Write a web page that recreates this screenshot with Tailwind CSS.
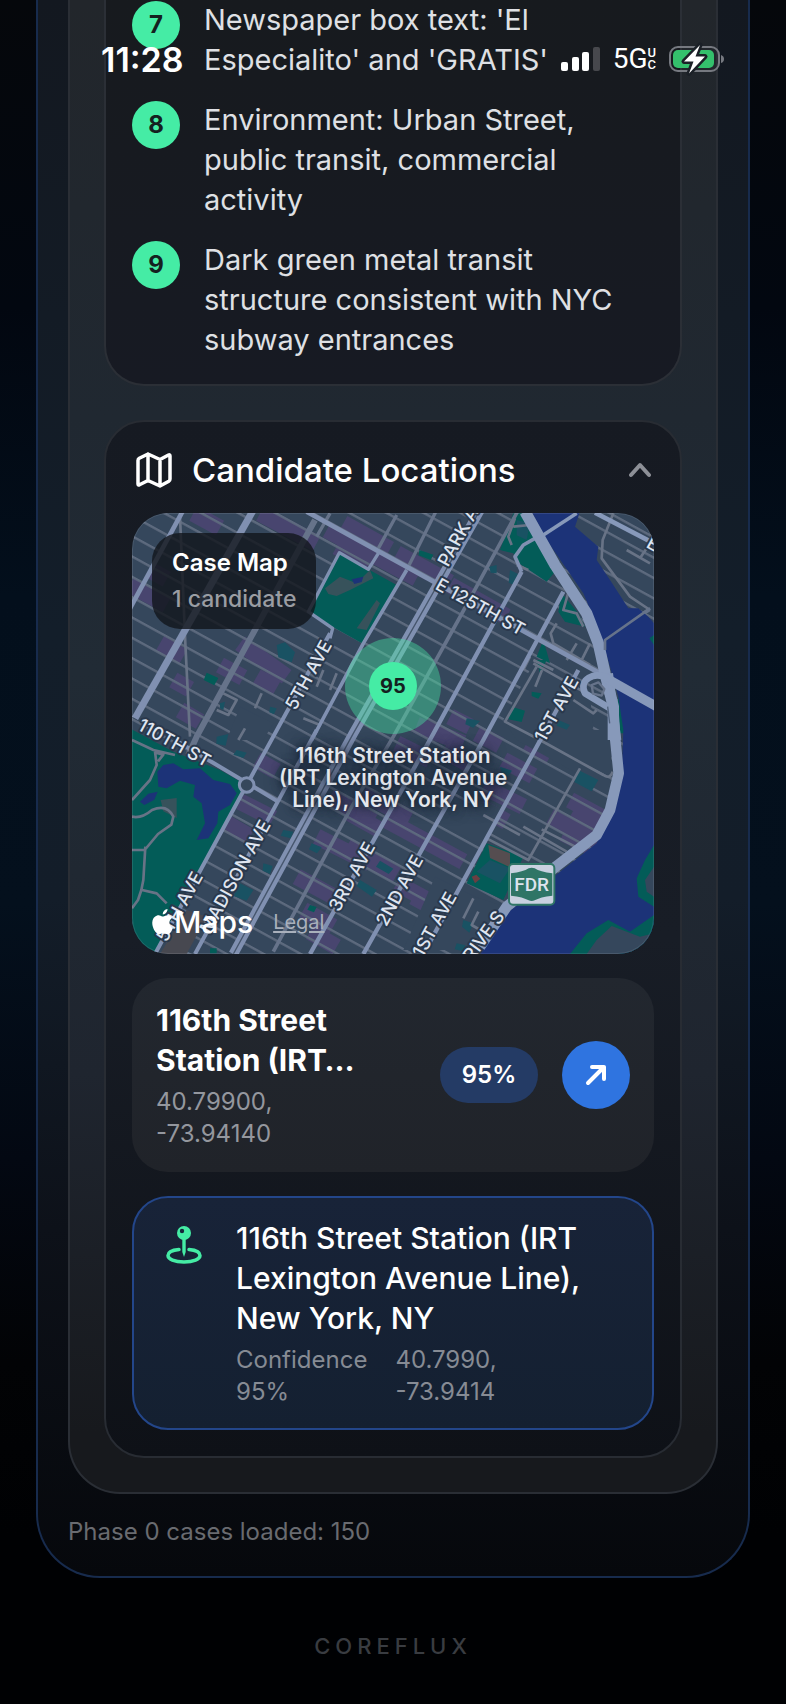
<!DOCTYPE html>
<html lang="en">
<head>
  <meta charset="UTF-8">
  <meta name="viewport" content="width=device-width, initial-scale=1.0">
  <title>Coreflux - Case Report</title>
  <script src="https://cdn.jsdelivr.net/npm/@tailwindcss/browser@4"></script>
</head>
<body class="min-h-screen overflow-x-hidden bg-[#000103] font-['Inter','Noto_Sans',sans-serif] text-white">
  <div class="relative min-h-screen bg-[linear-gradient(#05070b_0%,#020710_18%,#030f1c_35%,#04101d_53%,#030812_68%,#020305_80%,#000103_90%)] px-9">

    <!-- Status bar -->
    <header class="absolute inset-x-0 top-0 z-20 flex h-[118px] items-center justify-between pr-[62px] pl-[101px]">
      <span class="text-[34px] font-semibold">11:28</span>
      <div class="flex items-center gap-3">
        <svg class="h-6 w-[40px]" viewBox="0 0 40 24" aria-label="Signal strength">
          <rect x="0" y="15" width="7" height="9" rx="2" fill="#fff"/>
          <rect x="11" y="10" width="7" height="14" rx="2" fill="#fff"/>
          <rect x="21" y="5" width="7" height="19" rx="2" fill="#fff"/>
          <rect x="32" y="0" width="7" height="24" rx="2" fill="#47484d"/>
        </svg>
        <span class="flex items-center font-['Roboto',sans-serif] text-[28px]">5G<span class="flex flex-col text-[13px] leading-3 font-medium"><span>U</span><span>C</span></span></span>
        <svg class="h-[30px] w-[56px] overflow-visible" viewBox="0 0 56 30" aria-label="Battery charging">
          <rect x="2" y="3" width="49" height="24" rx="8" fill="none" stroke="#767980" stroke-width="2"/>
          <path d="M53 11q3 1 3 4t-3 4z" fill="#767980"/>
          <rect x="5" y="6" width="41" height="18" rx="5" fill="#34c06c"/>
          <path d="M32 1 16 17.500h9.500L21 29.500 37 12.500H27.500z" fill="#fff" stroke="#1b2027" stroke-width="5" paint-order="stroke" stroke-linejoin="round"/>
        </svg>
      </div>
    </header>

    <main class="rounded-b-[64px] border-2 border-t-0 border-[#172b4d] bg-[linear-gradient(#131820_0%,#131e2a_40%,#131d29_57%,#0d1119_78%,#06080c_100%)] px-[30px] pb-6">
      <div class="rounded-b-[52px] border-2 border-t-0 border-[#2a2e35] bg-[linear-gradient(#22262b_0%,#202831_28%,#212b35_45%,#1f252f_72%,#17191d_96%)] px-[34px] pb-[34px]">

        <!-- Evidence list -->
        <section class="rounded-b-[40px] border-2 border-t-0 border-[#2b2f36] bg-linear-to-b from-[#171a1e] to-[#171a23] px-[26px] pb-6">
          <ol class="flex flex-col gap-5 text-[29px] leading-10 text-[#dfe0e4]">
            <li class="flex items-start gap-6">
              <span class="mt-px flex size-12 shrink-0 items-center justify-center rounded-full bg-[#45eca5] text-2xl font-bold text-[#14211f]">7</span>
              <p>Newspaper box text: 'El<br>Especialito' and 'GRATIS'</p>
            </li>
            <li class="flex items-start gap-6">
              <span class="mt-px flex size-12 shrink-0 items-center justify-center rounded-full bg-[#45eca5] text-2xl font-bold text-[#14211f]">8</span>
              <p>Environment: Urban Street,<br>public transit, commercial<br>activity</p>
            </li>
            <li class="flex items-start gap-6">
              <span class="mt-px flex size-12 shrink-0 items-center justify-center rounded-full bg-[#45eca5] text-2xl font-bold text-[#14211f]">9</span>
              <p>Dark green metal transit<br>structure consistent with NYC<br>subway entrances</p>
            </li>
          </ol>
        </section>

        <!-- Candidate locations -->
        <section class="mt-[34px] rounded-[40px] border-2 border-[#282c33] bg-linear-to-b from-[#161a22] via-[#181d26] to-[#0e1117] px-[26px] pt-5 pb-[26px]">
          <button type="button" class="flex h-14 w-full items-center text-left">
            <svg class="ml-1 size-9" viewBox="0 0 36 36" fill="none" stroke="#fff" stroke-width="3.500" stroke-linejoin="round" stroke-linecap="round" aria-hidden="true">
              <path d="M2 8.500q0-1.500 1.300-2.200L12 2l12 5.500 8.500-4.500q1.500-.6 1.500 1V27q0 1.500-1.200 2.200L24 34l-12-5.500-8.500 4.300Q2 33.400 2 32zM12 2v26.500M24 7.500V34"/>
            </svg>
            <h2 class="ml-5 grow text-[33px] leading-10 font-medium">Candidate Locations</h2>
            <svg class="mr-[3px] h-4 w-[22px]" viewBox="0 0 22 16" fill="none" stroke="#8d9097" stroke-width="4" stroke-linecap="round" stroke-linejoin="round" aria-hidden="true"><path d="m2 13 9-10 9 10"/></svg>
          </button>

          <div class="relative mt-[15px] overflow-hidden rounded-[36px]">
            <svg class="block w-full" viewBox="6 9 1566 1323" role="img" aria-label="Map of East Harlem">
              <defs>
                <pattern id="streets" width="61" height="61" patternUnits="userSpaceOnUse" patternTransform="translate(0 -295) skewY(28.72)">
                  <rect y="0" width="61" height="8" fill="#5d6a7e"/>
                </pattern>
              </defs>
              <rect x="6" y="9" width="1566" height="1323" fill="#35475c"/>

              <!-- commercial blocks -->
              <g fill="none" stroke="#48456f" stroke-width="50">
                <path d="M190 10 270 54M390 10 560 100M590 60 860 205M640 40 780 118M620 110 720 165M800 130l160 88M960 225l170 95M900 190l-90-50"/>
                <path d="M0 225 110 285M60 180l50 28M90 400l70 40M270 465l70 38M130 510l50 28M330 400 470 500M380 500l60 34M150 600l60 35M860 645 1000 700M960 620l60 30M1040 670l70 36"/>
                <path d="M380 750l60 34M330 875 430 925M290 940l70 40M600 860 730 935M560 980 720 1060M660 910l90 50M500 1100l130 70M650 1010l150 85M520 1200l90 50M540 1265l80 46M760 925 1000 1055M700 850l140 75M800 1120 920 1185M850 1160l110 60"/>
                <path d="M800 700 900 750M940 720l80 45M1060 830 1180 890M1120 750l90 48M1190 700l70 40M1050 890l80 45M1260 920 1380 985M1320 870 1440 935M1320 920l110 60M1300 970l120 60"/>
              </g>

              <rect x="6" y="9" width="1566" height="1323" fill="url(#streets)"/>

              <!-- campus blocks without through streets -->
              <g fill="#35475c">
                <path d="M330 590 430 640 400 690 290 690zM1205 470 1300 500 1380 560 1390 650 1340 790 1160 690 1120 630zM1080 880 1120 900 1060 1010 930 940 950 880zM1310 660h140l-10 140-120-60zM915 1100l120 60 120 40-60 120H820z"/>
              </g>
              <g fill="#195263">
                <path d="m440 405 25-8 30 30-10 30-40-15zM270 580l15-5-5 25-10-5zM420 590l20 5-8 18-14-6zM260 680l35-8-8 35-28-6zM320 720l30 8-10 16-30-10zM460 960l30 5-8 20-30-8zM545 1000l30 12-14 18-24-12zM400 1060l28 8-8 24-22-10zM330 1120l40 20-20 32-40-14zM690 1110l50 30-14 20-46-32zM750 1052l40 24-14 16-38-22zM1078 170l22-5v25l-18-2zM1140 180l24 12-10 34-18-8zM1345 780l60 30-20 34-52-28zM1110 770l36 12-20 28-10-20zM1010 625l40 8-20 20-24-10zM1285 630l35 15-10 14-30-12zM1050 1040l90 50-20 40-90-40zM1000 1230l30 10-12 28-22-18zM980 1300l26 6-6 18-26-6z"/>
              </g>

              <!-- parks -->
              <g fill="#035c58">
                <path d="M628 130 800 225 700 402 535 310z"/>
                <path d="M0 655 130 725 270 780 340 820 350 835 75 1332H0z"/>
                <path d="M1150 10h50l10 60 65 115-25 30-90-60-10-25-40-10zM1295 250l50 60 20 40-60-15-20-30zM1240 390l20 70-40-20zM1220 450h30l-20 40z"/>
                <path d="m230 488 35 16-12 22-32-16zM868 120l42 14-8 16-36-14zM1205 545l30 5-10 16-20-8zM1145 590l40 12-10 34-40-8zM540 1185l20 6-8 16-20-8zM240 1315h20v15h-20z"/>
                <path d="M1070 1000 1180 1040 1120 1170 1010 1120zM1470 540l14 130h-40z"/>
              </g>
              <path d="M1080 1050 1140 1075 1110 1120 1040 1085z" fill="#195263"/>
              <path d="M1160 30l40 10-10 50-30-14z" fill="#195263"/>
              <g fill="#37525b">
                <path d="m585 235 45-35 50 20 40-40 10 25-70 35-40 18-25-6zM740 270l10 10-40 80-30-5zM92 870l48-6v60l-40-20z"/>
              </g>
              <path d="m1075 1005 65 25v42l-60-28z" fill="#554d50"/>
              <path d="m1025 1100 14-6 12 12-16 14z" fill="#6a3f43"/>
              <path d="m170 1200 60 20-60 112H90z" fill="#474850"/>

              <!-- ponds -->
              <g fill="#1c3378">
                <path d="m665 208 35-8-5 16-22 6z"/>
                <path d="M82 785 100 765 130 760 160 778 210 775 250 810 300 822 320 850 300 885 265 905 262 940 235 985 200 990 225 940 215 880 190 860 195 825 150 812 110 835 85 830z"/>
                <path d="m30 875 25-24 28-6-10 24-30 16z"/>
              </g>

              <!-- park paths and small roads -->
              <g fill="none" stroke="#687386" stroke-width="8" stroke-linejoin="round">
                <path d="M6 690 70 720 135 735M75 725 80 765 60 810 6 870M6 920q30 6 60-20 45-20 64 20l-6 24-40 28-40 48H6M46 1010 40 1110 34 1140 24 1170 6 1195M36 1140 80 1150 110 1180M78 728l22 6-16 20"/>
                <path d="M150 20 166 400 180 680"/>
                <path d="M1155 25 1135 80 1145 105M1150 50 1200 45M1160 165 1195 180M1320 230 1300 300 1340 310 1360 350M1280 340 1262 370 1270 400 1380 465M1210 450l60 30M1200 440l-20 40M1340 400 1310 450M1380 400 1350 460M1210 460l230 130M1330 570l60 40 10-10"/>
                <path d="M1450 10 1418 90 1415 145 1500 260 1560 300M1490 120 1560 160M1550 115 1530 145M1420 390 1560 295M1420 390v30"/>
                <path d="M1220 470 1125 635 1230 690M1236 480l-20 50M280 550 320 570 295 615 260 600M395 550 375 595M345 655 325 690M580 480l-20 50M620 490l-20 50M520 625l50 20-12 20"/>
                <path d="M1350 775 1195 1050 1070 985M1235 958 1340 1012M1180 950l130 75M1060 915l110 60M1230 690 1420 795q20 14 28-10M1030 1165l-30 60M1045 1205l-20 40 26 15"/>
              </g>

              <!-- avenues -->
              <g fill="none" stroke="#66738a" stroke-linejoin="round">
                <path d="M555 30 200 680 175 735" stroke-width="18"/>
                <path d="M1165 0 985 330 790 680 665 890 430 1325" stroke-width="11"/>
                <path d="M920 0 830 180M800 15 745 115M600 10 560 80" stroke-width="10"/>
                <path d="m1560 300-140 90" stroke-width="7"/>
              </g>
              <g fill="none" stroke="#8090b1" stroke-linejoin="round">
                <path d="M160 0 0 295" stroke-width="14"/>
                <path d="M370 0 15 625" stroke-width="21"/>
                <path d="M530 5 1410 490" stroke-width="14"/>
                <path d="M745 130 715 178 628 128 535 305 608 355 600 385" stroke-width="10"/>
                <path d="M600 370 350 825 75 1332M135 690 440 872M560 660 195 1332" stroke-width="12"/>
                <path d="M830 180 700 400 545 690" stroke-width="11"/>
                <path d="M1175 185 905 680 540 1332M1300 245 1060 690 700 1332" stroke-width="13"/>
                <path d="M1175 185 1155 140 1180 105 1215 85" stroke-width="11"/>
                <path d="M1345 480 1220 710 985 1140 880 1332" stroke-width="13"/>
                <path d="M1050 0 670 670 310 1332" stroke-width="29"/>
                <path d="M1050 0 670 670 310 1332" stroke="#46566d" stroke-width="4"/>
                <circle cx="350" cy="825" r="22" fill="#35475c" stroke-width="9"/>
              </g>

              <!-- East River and Harlem River -->
              <path d="M1205 5H1350L1335 50 1405 110 1400 150 1440 210 1495 295 1525 295 1555 320 1572 340V1332H1050L1130 1210 1400 1000 1440 920 1475 800 1480 660 1465 560 1440 470 1410 370 1360 250 1250 90z" fill="#1c3378"/>
              <path d="M1572 1005 1545 1050 1520 1105 1525 1160 1572 1190zM1320 1332 1370 1270 1435 1230 1500 1265 1572 1215V1332z" fill="#035c58"/>
              <path d="M1572 1070 1545 1110 1550 1145 1572 1160zM1370 1332 1400 1290 1445 1248 1530 1280 1572 1270V1332z" fill="#35475c"/>
              <path d="M1572 375l-14 10 14 20z" fill="#035c58"/>

              <!-- FDR Drive and bridges -->
              <g fill="none" stroke="#8799ba" stroke-linejoin="round">
                <path d="M1240 75 1340 10" stroke-width="11"/>
                <path d="M1395 8 1572 100" stroke-width="14"/>
                <path d="M1185 5 1275 165 1370 310 1405 400 1425 490 1450 590 1450 690" stroke-width="34"/>
                <path d="M1440 490 1465 690" stroke-width="18"/>
                <path d="M1450 600 1456 690 1466 790 1440 900 1400 975 1280 1068 1130 1190 1050 1310" stroke-width="32"/>
                <path d="M1420 500 1580 590" stroke-width="28"/>
                <path d="M1440 508C1390 480 1345 510 1365 550L1440 595" stroke-width="20"/>
                <path d="M1385 525l20-8 18 20-8 20-26-6z" stroke="#66738a" stroke-width="7"/>
                <path d="M1433 590l6 50" stroke="#50627c" stroke-width="4"/>
                <path d="M1560 295 1425 390v30" stroke="#66738a" stroke-width="8"/>
              </g>

              <!-- street names -->
              <g fill="#dfe5f0" stroke="#2a384c" stroke-width="12" paint-order="stroke" stroke-linejoin="round" font-family="Inter, sans-serif" font-size="54" font-weight="500" text-anchor="middle">
                <text transform="translate(954 173) rotate(-61)" text-anchor="start">PARK AVE</text>
                <text transform="translate(1042 307) rotate(29)">E 125TH ST</text>
                <text transform="translate(552 504) rotate(-61)">5TH AVE</text>
                <text transform="translate(1296 606) rotate(-61)">1ST AVE</text>
                <text transform="translate(124 715) rotate(29)">110TH ST</text>
                <text transform="translate(332 1109) rotate(-61)">MADISON AVE</text>
                <text transform="translate(165 1199) rotate(-61)">5TH AVE</text>
                <text transform="translate(682 1109) rotate(-61)">3RD AVE</text>
                <text transform="translate(825 1150) rotate(-61)">2ND AVE</text>
                <text transform="translate(930 1252) rotate(-61)">1ST AVE</text>
                <text transform="translate(1126 1220) rotate(-54)" text-anchor="end">FDR DRIVE S</text>
                <text transform="translate(1546 110) rotate(29)" text-anchor="start">E 132ND ST</text>
              </g>

              <!-- highway shield -->
              <rect x="1137" y="1062" width="136" height="122" rx="12" fill="#c9d1e0" stroke="#2f7566" stroke-width="6"/>
              <path d="M1143 1090Q1180 1086 1196 1075q9-4 18 0 16 11 53 15v67q-37 4-53 14-9 4-18 0-16-10-53-14z" fill="#2f7566"/>
              <text x="1205" y="1144" fill="#dde3ee" font-family="Roboto, sans-serif" font-size="57" font-weight="500" text-anchor="middle">FDR</text>
            </svg>

            <!-- map overlays -->
            <div class="absolute top-5 left-5 rounded-[28px] bg-[#11151b]/80 px-5 py-3 leading-9">
              <p class="text-2xl leading-9 font-semibold">Case Map</p>
              <p class="text-[23px] font-medium text-[#9a9da3]">1 candidate</p>
            </div>
            <div class="absolute top-[173px] left-1/2 flex size-24 -translate-1/2 items-center justify-center rounded-full bg-[#45eca5]/40">
              <span class="flex size-12 items-center justify-center rounded-full bg-[#45eca5] text-[20px] font-bold text-[#14211f]">95</span>
            </div>
            <p class="absolute top-[232px] left-1/2 -translate-x-1/2 text-center text-[21px] leading-[22px] font-semibold whitespace-nowrap text-[#e4e8ee] [text-shadow:0_0_4px_#1d2838,0_0_10px_#1d2838,0_0_16px_#1d2838]">116th Street Station<br>(IRT Lexington Avenue<br>Line), New York, NY</p>
            <div class="absolute bottom-[14px] left-5 flex items-center">
              <svg class="h-[26px] w-[22px]" viewBox="0 0 22 26" fill="#fff" aria-hidden="true">
                <path d="M15.500 0c.2 2.600-2 5.500-4.700 5.600C10.500 3 12.900.3 15.500 0zM20 9c-4 2.600-3.200 8.300.9 9.900-.9 2.700-3 6.300-5.200 6.300-1.700 0-2.200-1-4.300-1s-2.700 1-4.300 1C3.700 25.200-.2 18.300.3 13.200.8 8 4.600 6 7.400 6.400c1.700.3 2.600 1.100 3.800 1.100 1.300 0 2.600-1.200 4.600-1.200C17.500 6.300 19.100 7.500 20 9z"/>
              </svg>
              <span class="text-[30px] leading-9 font-medium">Maps</span>
              <a href="#legal" class="ml-5 text-[20px] text-[#a9b0bc] underline underline-offset-2">Legal</a>
            </div>
            <div class="absolute inset-0 rounded-[36px] border border-white/10"></div>
          </div>

          <!-- Candidate row -->
          <div class="mt-6 flex items-center rounded-[36px] bg-linear-to-b from-[#22272f] to-[#202329] px-6 py-[22px]">
            <div class="grow">
              <h3 class="text-[30px] leading-10 font-bold">116th Street<br>Station (IRT…</h3>
              <p class="mt-1.5 text-2xl leading-8 text-[#94979e]">40.79900,<br>-73.94140</p>
            </div>
            <span class="flex h-14 w-[98px] items-center justify-center rounded-full bg-[#243b65] text-2xl font-semibold">95%</span>
            <a href="#open" aria-label="Open location" class="ml-6 flex size-[68px] items-center justify-center rounded-full bg-[#2f74e0]">
              <svg class="size-6" viewBox="0 0 24 24" fill="none" stroke="#fff" stroke-width="4" stroke-linecap="round" stroke-linejoin="round" aria-hidden="true"><path d="M4 20 20 4M8 4h12v12"/></svg>
            </a>
          </div>

          <!-- Selected candidate -->
          <div class="mt-6 flex items-start gap-[34px] rounded-[36px] border-2 border-[#23468a] bg-linear-to-b from-[#182338] to-[#142031] py-5 pr-6 pl-8">
            <svg class="mt-2 h-[38px] w-9 shrink-0" viewBox="0 0 36 38" fill="none" aria-hidden="true">
              <path d="M13 23.500C6 24 2 26.500 2 29.500c0 3.700 6.500 6.500 16 6.500s16-2.800 16-6.500c0-3-4-5.500-11-6" stroke="#45eca5" stroke-width="3.500" stroke-linecap="round"/>
              <path d="M16.300 12h3.400v14L18 31l-1.700-5z" fill="#45eca5"/>
              <circle cx="18" cy="7" r="7" fill="#45eca5"/>
              <circle cx="16" cy="5" r="2.200" fill="#17243a"/>
            </svg>
            <div>
              <h3 class="text-[30px] leading-10 font-medium">116th Street Station (IRT<br>Lexington Avenue Line),<br>New York, NY</h3>
              <div class="mt-1.5 flex gap-7 text-2xl leading-8 text-[#868b94]">
                <p>Confidence<br>95%</p>
                <p>40.7990,<br>-73.9414</p>
              </div>
            </div>
          </div>
        </section>
      </div>

      <p class="mt-[22px] mb-1 text-2xl leading-8 text-[#696b70]">Phase 0 cases loaded: 150</p>
    </main>

    <footer class="pt-[52px] pb-10 text-center text-[22px] leading-8 font-medium tracking-[5px] text-[#393c41]">COREFLUX</footer>
  </div>
</body>
</html>
